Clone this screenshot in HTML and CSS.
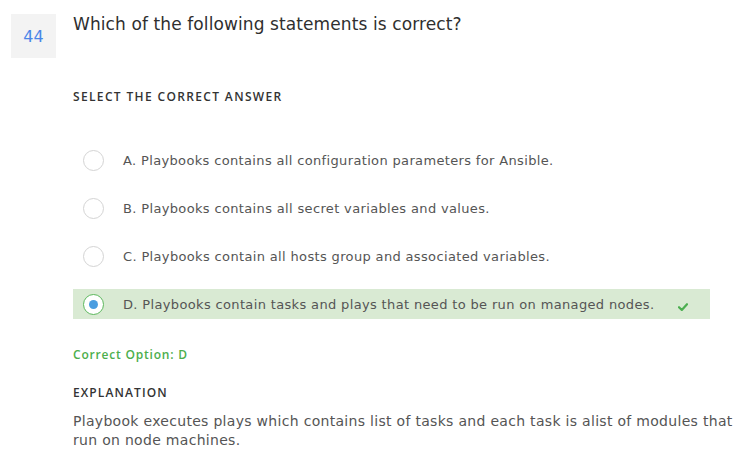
FILE: index.html
```html
<!DOCTYPE html>
<html>
<head>
<meta charset="utf-8">
<link rel="stylesheet" href="styles.css">
</head>
<body>
<div class="question">
  <div class="qnum">44</div>
  <div class="qbody">
    <div class="qtitle">Which of the following statements is correct?</div>
    <div class="label select-label">SELECT THE CORRECT ANSWER</div>
    <div class="options">
      <div class="option"><span class="radio"></span><span class="otext">A. Playbooks contains all configuration parameters for Ansible.</span></div>
      <div class="option"><span class="radio"></span><span class="otext">B. Playbooks contains all secret variables and values.</span></div>
      <div class="option"><span class="radio"></span><span class="otext">C. Playbooks contain all hosts group and associated variables.</span></div>
      <div class="option correct"><span class="radio checked"><span class="dot"></span></span><span class="otext">D. Playbooks contain tasks and plays that need to be run on managed nodes.</span>
        <svg class="check" width="10" height="8" viewBox="0 0 10 8"><path d="M1 4.2 L3.8 7 L9 1.2" fill="none" stroke="#4caf50" stroke-width="2.2" stroke-linecap="round" stroke-linejoin="round"/></svg>
      </div>
    </div>
    <div class="correct-opt">Correct Option: D</div>
    <div class="label expl-label">EXPLANATION</div>
    <div class="expl">Playbook executes plays which contains list of tasks and each task is alist of modules that run on node machines.</div>
  </div>
</div>
</body>
</html>
```
FILE: styles.css
```css
html, body {
  margin: 0;
  padding: 0;
  background: #ffffff;
}
body {
  font-family: "DejaVu Sans", "Open Sans", sans-serif;
  color: #333;
}
.question {
  display: flex;
  align-items: flex-start;
  padding: 14px 0 0 11px;
  gap: 17px;
}
.qnum {
  width: 45px;
  height: 44px;
  background: #f3f3f3;
  color: #4a86e8;
  font-size: 16px;
  display: flex;
  align-items: center;
  justify-content: center;
  flex-shrink: 0;
}
.qbody {
  flex: 1;
  min-width: 0;
}
.qtitle {
  font-size: 17px;
  line-height: 21px;
  color: #2f2f2f;
  letter-spacing: 0.1px;
}
.label {
  font-family: "Open Sans", sans-serif;
  font-size: 12px;
  line-height: 16px;
  font-weight: 600;
  color: #333;
  letter-spacing: 1.35px;
}
.select-label {
  margin-top: 54px;
}
.options {
  margin-top: 40px;
  display: flex;
  flex-direction: column;
  gap: 18px;
  width: 637px;
}
.option {
  height: 30px;
  display: flex;
  align-items: center;
  padding-left: 10px;
  box-sizing: border-box;
}
.option.correct {
  background: #d9ead3;
}
.radio {
  width: 21px;
  height: 21px;
  border: 1px solid #d4d4d4;
  border-radius: 50%;
  box-sizing: border-box;
  background: #fff;
  flex-shrink: 0;
  display: flex;
  align-items: center;
  justify-content: center;
}
.radio.checked {
  border: 1.5px solid #5cb85c;
}
.dot {
  width: 9px;
  height: 9px;
  border-radius: 50%;
  background: #4a9de0;
}
.otext {
  margin-left: 19px;
  font-size: 13px;
  color: #555;
  flex: 1;
  letter-spacing: 0.35px;
}
.check {
  margin-right: 22px;
  margin-top: 6px;
}
.correct-opt {
  margin-top: 28px;
  font-family: "Open Sans", sans-serif;
  font-size: 12px;
  line-height: 16px;
  font-weight: 600;
  color: #4cae4c;
  letter-spacing: 0.8px;
}
.expl-label {
  margin-top: 22px;
  letter-spacing: 1.1px;
}
.expl {
  margin-top: 11px;
  font-size: 14px;
  line-height: 19px;
  color: #555;
  letter-spacing: 0.3px;
  padding-right: 10px;
}
```
